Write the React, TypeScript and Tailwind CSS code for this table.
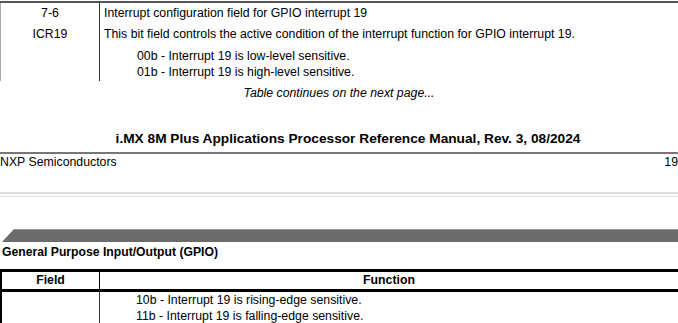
export default function App() {
  const font = { fontFamily: '"Liberation Sans", Arial, sans-serif' };
  return (
    <div className="w-[678px] h-[323px] overflow-hidden bg-white text-black" style={font}>
      {/* table fragment from previous page */}
      <div className="border-t-2 border-[#555] mt-px">
        <div className="flex">
          <div className="w-[100px] border-l border-[#aaa] border-r border-r-[#333] flex flex-col items-center">
            <div className="h-[22px] pt-[3px] text-[12.3px] leading-[15px]">7-6</div>
            <div className="h-[56px] pt-[2px] text-[12.3px] leading-[15px]">ICR19</div>
          </div>
          <div className="flex-1 pl-[4px] text-[12.3px] leading-[15px]">
            <div className="h-[22px] pt-[3px]">Interrupt configuration field for GPIO interrupt 19</div>
            <div className="pt-[2px]">This bit field controls the active condition of the interrupt function for GPIO interrupt 19.</div>
            <div className="pl-[33px] pt-[6px] leading-[16px]">
              <div>00b - Interrupt 19 is low-level sensitive.</div>
              <div>01b - Interrupt 19 is high-level sensitive.</div>
            </div>
          </div>
        </div>
      </div>
      <div className="text-center italic text-[12.3px] leading-[15px] pt-[5px]">Table continues on the next page...</div>

      {/* page footer */}
      <div className="mt-[29px] pl-[18px] text-center font-bold text-[13.7px] leading-[17px]">
        i.MX 8M Plus Applications Processor Reference Manual, Rev. 3, 08/2024
      </div>
      <div className="mt-[5px] border-t-2 border-[#777]" />
      <div className="flex justify-between text-[12.3px] leading-[15px] pt-[1px]">
        <span>NXP Semiconductors</span>
        <span>19</span>
      </div>

      {/* page break */}
      <div className="mt-[22px] border-t-2 border-[#ddd]" />
      <div className="mt-[2px] border-t border-[#e5e5e5]" />

      {/* next page header bar */}
      <div className="mt-[32px] flex h-[13px]">
        <svg width="14" height="13" viewBox="0 0 14 13" className="shrink-0">
          <polygon points="14,0 14,13 2,13" fill="#6b6b6b" />
        </svg>
        <div className="flex-1 bg-[#6b6b6b] border-t border-[#999]" />
      </div>
      <div className="pt-[3px] pl-[2px] font-bold text-[12.2px] leading-[15px]">General Purpose Input/Output (GPIO)</div>

      {/* table */}
      <div className="mt-[9px] border-l-2 border-black">
        <div className="flex border-y-[3px] border-black font-bold text-[12.3px] leading-[15px] h-[23px]">
          <div className="w-[98px] border-r border-black flex items-center justify-center">Field</div>
          <div className="flex-1 flex items-center justify-center">Function</div>
        </div>
        <div className="flex text-[12.3px] leading-[16px]">
          <div className="w-[98px] border-r border-[#333] h-[40px]" />
          <div className="flex-1 pl-[36px]">
            <div>10b - Interrupt 19 is rising-edge sensitive.</div>
            <div>11b - Interrupt 19 is falling-edge sensitive.</div>
          </div>
        </div>
      </div>
    </div>
  );
}
